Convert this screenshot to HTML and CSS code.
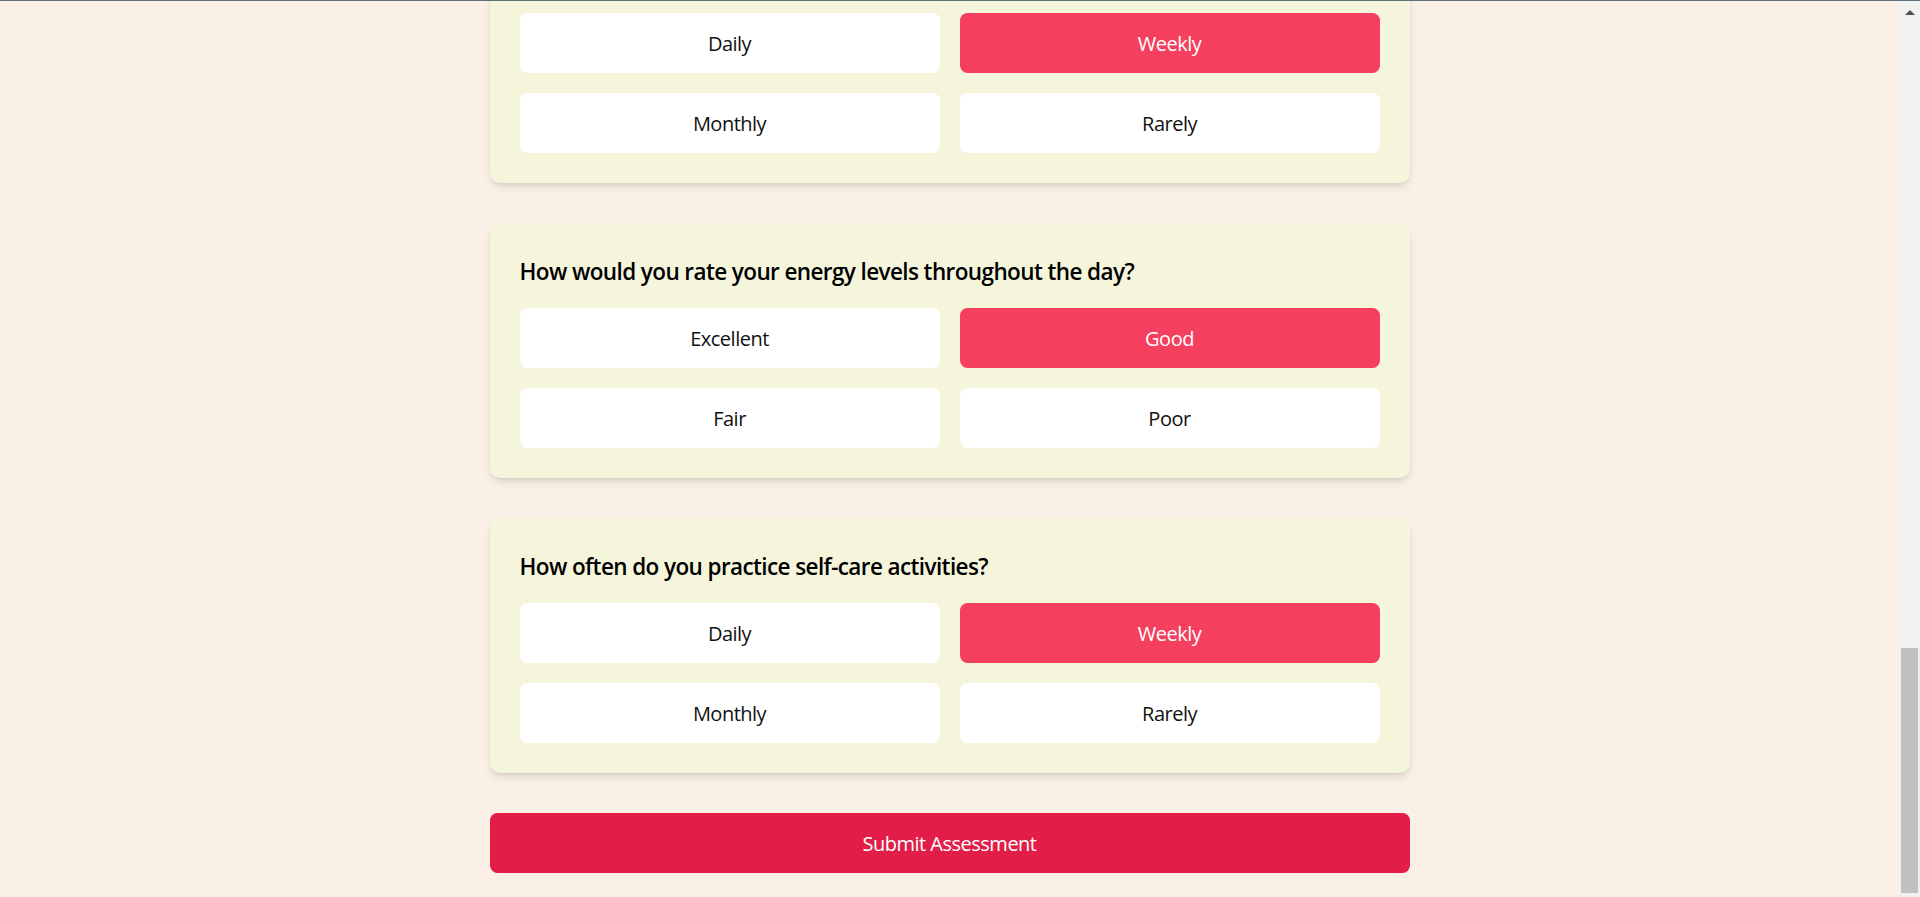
FILE: index.html
```html
<!DOCTYPE html>
<html lang="en">
<head>
<meta charset="utf-8">
<title>Wellness Assessment</title>
<link rel="stylesheet" href="styles.css">
</head>
<body>
<div class="frame">
  <div class="topline"></div>
  <div class="view">
    <div class="page">
      <div class="container">
        <section class="card">
          <h2 class="question"></h2>
          <div class="options">
            <button class="option">Daily</button>
            <button class="option selected">Weekly</button>
            <button class="option">Monthly</button>
            <button class="option">Rarely</button>
          </div>
        </section>
        <section class="card">
          <h2 class="question">How would you rate your energy levels throughout the day?</h2>
          <div class="options">
            <button class="option">Excellent</button>
            <button class="option selected">Good</button>
            <button class="option">Fair</button>
            <button class="option">Poor</button>
          </div>
        </section>
        <section class="card">
          <h2 class="question">How often do you practice self-care activities?</h2>
          <div class="options">
            <button class="option">Daily</button>
            <button class="option selected">Weekly</button>
            <button class="option">Monthly</button>
            <button class="option">Rarely</button>
          </div>
        </section>
        <button class="submit">Submit Assessment</button>
      </div>
    </div>
    <div class="scrollbar">
      <div class="scroll-arrow"></div>
      <div class="scroll-space"></div>
      <div class="scroll-thumb"></div>
    </div>
  </div>
</div>
</body>
</html>
```

FILE: styles.css
```css
* {
  box-sizing: border-box;
}

html, body {
  margin: 0;
  padding: 0;
  height: 100%;
  overflow: hidden;
}

body {
  font-family: "Open Sans", "Noto Sans", sans-serif;
  background: #faf0e6;
  color: #111;
}

.frame {
  height: 897px;
  display: flex;
  flex-direction: column;
}

.topline {
  height: 1px;
  background: #5f717c;
  flex: none;
}

.view {
  flex: 1;
  display: flex;
  min-height: 0;
}

.page {
  flex: 1;
  overflow: hidden;
  display: flex;
  flex-direction: column;
  justify-content: flex-end;
}

.container {
  width: 920px;
  margin: 0 auto;
  padding-bottom: 24px;
  display: flex;
  flex-direction: column;
  flex: none;
}

.card {
  background: #f5f5dc;
  border-radius: 10px;
  padding: 30px;
  margin-bottom: 40px;
  box-shadow: 0 5px 8px -1px rgba(0, 0, 0, 0.1), 0 2px 5px -2px rgba(0, 0, 0, 0.1);
}

.question {
  margin: 0 0 19px;
  padding-top: 1px;
  min-height: 36px;
  font-size: 22.5px;
  line-height: 35px;
  font-weight: 600;
  letter-spacing: -0.6px;
  color: #000;
}

.options {
  display: grid;
  grid-template-columns: 1fr 1fr;
  gap: 20px;
}

.option {
  font-family: inherit;
  font-size: 20px;
  line-height: 30px;
  letter-spacing: -0.5px;
  padding: 16px 15px 14px;
  border: none;
  border-radius: 7.5px;
  background: #ffffff;
  color: #111;
  text-align: center;
}

.option.selected {
  background: #f43f5e;
  color: #ffffff;
}

.submit {
  font-family: inherit;
  font-size: 20px;
  line-height: 30px;
  letter-spacing: -0.5px;
  padding: 16px 15px 14px;
  border: none;
  border-radius: 7.5px;
  background: #e11d48;
  color: #ffffff;
  width: 100%;
}

.scrollbar {
  width: 21px;
  flex: none;
  background: #f1f1f1;
  display: flex;
  flex-direction: column;
  align-items: center;
  padding-bottom: 4px;
}

.scroll-arrow {
  margin-top: 9px;
  width: 0;
  height: 0;
  border-left: 5px solid transparent;
  border-right: 5px solid transparent;
  border-bottom: 5px solid #505050;
}

.scroll-space {
  flex: 1;
}

.scroll-thumb {
  width: 17px;
  height: 245px;
  background: #c1c1c1;
}
```
